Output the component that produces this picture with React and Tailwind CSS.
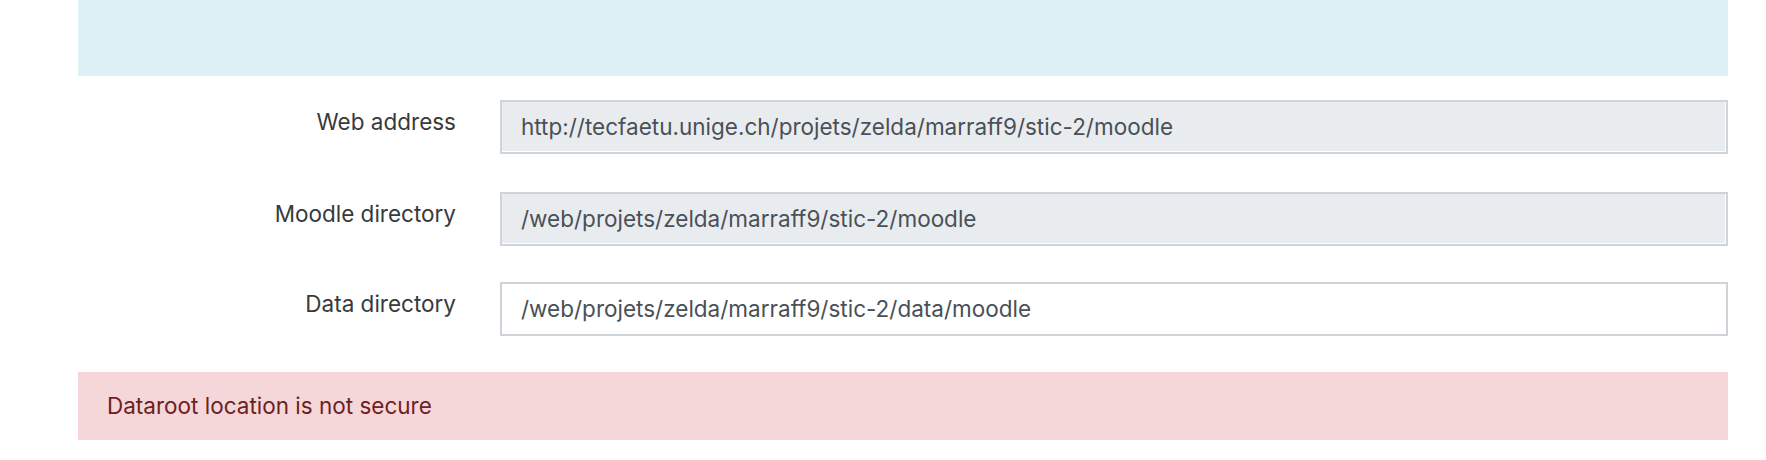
export default function App() {
  const font = { fontFamily: 'Inter, "Noto Sans", sans-serif' };
  const rows = [
    { label: "Web address", value: "http://tecfaetu.unige.ch/projets/zelda/marraff9/stic-2/moodle", ro: true, mb: "mb-[38px]" },
    { label: "Moodle directory", value: "/web/projets/zelda/marraff9/stic-2/moodle", ro: true, mb: "mb-[36px]" },
    { label: "Data directory", value: "/web/projets/zelda/marraff9/stic-2/data/moodle", ro: false, mb: "mb-[36px]" },
  ];
  return (
    <div className="w-[1766px] h-[460px] bg-white overflow-hidden" style={font}>
      <div className="ml-[78px] w-[1650px]">
        <div className="h-[76px] bg-[#def1f7] mb-[24px]"></div>
        {rows.map((r) => (
          <div key={r.label} className={`flex ${r.mb}`}>
            <div className="w-[378px] text-right pt-[5px] text-[22.5px] leading-[33.75px] text-[#373a3c]">
              {r.label}
            </div>
            <div
              className={`ml-[44px] flex-1 h-[54px] flex items-center pl-[19px] border-2 border-[#ced4da] text-[22.5px] leading-[33.75px] text-[#495057] ${
                r.ro ? "bg-[#e9ecef] shadow-[inset_-1px_-1px_0_#ffffff]" : "bg-white"
              }`}
            >
              <span>{r.value}</span>
            </div>
          </div>
        ))}
        <div className="h-[68px] bg-[#f5d7d9] flex items-center pl-[29px] text-[22.5px] leading-[33.75px] text-[#6e211e]">
          Dataroot location is not secure
        </div>
      </div>
    </div>
  );
}
